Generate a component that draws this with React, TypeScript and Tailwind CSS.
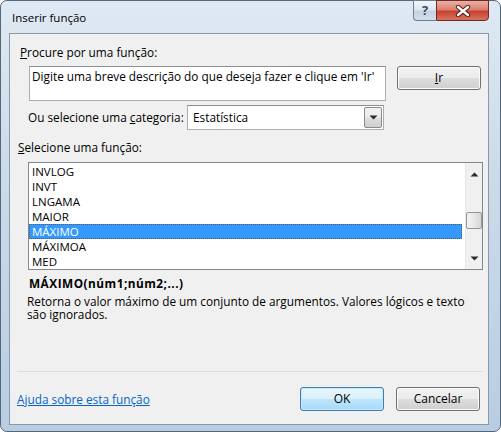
import React from 'react';

const font = { fontFamily: '"Open Sans", "Noto Sans", sans-serif' };

const funcs = ['INVLOG', 'INVT', 'LNGAMA', 'MAIOR', 'MÁXIMO', 'MÁXIMOA', 'MED'];

const Arrow: React.FC<{ down?: boolean }> = ({ down }) => (
    <svg width="9" height="5" viewBox="0 0 9 5">
        {down ? <path d="M0.5 0.5 H8.5 L4.5 4.5 Z" fill="#2b2b2b" /> : <path d="M0.5 4.5 H8.5 L4.5 0.5 Z" fill="#2b2b2b" />}
    </svg>
);

const VistaButton: React.FC<{ children: React.ReactNode; primary?: boolean }> = ({ children, primary }) => (
    <div
        className={`w-[84px] h-[24px] rounded-[3px] border flex items-center justify-center text-[12px] text-black ${
            primary
                ? 'border-[#3c7fb1] bg-[linear-gradient(180deg,#eaf6fd_0%,#d9f0fc_48%,#bee6fd_52%,#a7d9f5_100%)] shadow-[inset_0_0_0_1px_#c7e6f7]'
                : 'border-[#707070] bg-[linear-gradient(180deg,#f2f2f2_0%,#ebebeb_48%,#dddddd_52%,#cfcfcf_100%)] shadow-[inset_0_0_0_1px_#fbfbfb]'
        }`}
    >
        {children}
    </div>
);

const App: React.FC = () => {
    return (
        <div className="w-[501px] h-[432px] bg-white" style={font}>
            <div className="w-[501px] h-[432px] rounded-[7px] border border-[#55677b] bg-[linear-gradient(180deg,#dfe9f3_0%,#ccdbe9_40%,#b9cde2_100%)] flex flex-col">
                {/* title bar */}
                <div className="h-[32px] flex items-start justify-between pl-[11px] pr-[11px]">
                    <span className="mt-[9px] text-[11.5px] leading-[16px] text-black">Inserir função</span>
                    <div className="flex -mt-[1px]">
                        <div className="w-[23px] h-[21px] rounded-bl-[4px] border border-[#6a7d92] border-r-0 bg-[linear-gradient(180deg,#f3f6fa_0%,#dde6ef_45%,#c4d3e2_55%,#d2dfeb_100%)] flex items-center justify-center">
                            <span className="text-[13px] font-bold leading-none text-[#3f4c5a]">?</span>
                        </div>
                        <div className="w-[53px] h-[21px] rounded-br-[4px] border border-[#6d2a22] bg-[linear-gradient(180deg,#eab1a6_0%,#dc8070_45%,#c8422f_55%,#d9735f_100%)] flex items-center justify-center">
                            <svg width="16" height="12" viewBox="0 0 16 12">
                                <path d="M3 2 L13 10 M13 2 L3 10" stroke="#4a1a14" strokeWidth="4.2" strokeLinecap="round" />
                                <path d="M3 2 L13 10 M13 2 L3 10" stroke="#ffffff" strokeWidth="2.4" strokeLinecap="round" />
                            </svg>
                        </div>
                    </div>
                </div>

                {/* client area */}
                <div className="ml-[8px] w-[480px] h-[392px] border border-[#8799ad] bg-[#f0f0f0] flex flex-col text-[11.8px] text-black">
                    <div className="mt-[11px] ml-[10px] leading-[15px]">
                        <span className="underline">P</span>rocure por uma função:
                    </div>

                    <div className="mt-[6px] flex items-start">
                        <div className="ml-[19px] w-[357px] h-[35px] bg-white border border-[#abadb3] border-t-[#8e8f8f] px-[2px] pt-[2px] leading-[15px] whitespace-nowrap overflow-hidden">
                            Digite uma breve descrição do que deseja fazer e clique em 'Ir'
                        </div>
                        <div className="ml-[11px]">
                            <VistaButton>
                                <span className="underline">I</span>r
                            </VistaButton>
                        </div>
                    </div>

                    <div className="mt-[4px] flex items-center">
                        <span className="ml-[18px] w-[159px] shrink-0 whitespace-nowrap leading-[15px]">
                            Ou selecione uma <span className="underline">c</span>ategoria:
                        </span>
                        <div className="w-[197px] h-[25px] bg-white border border-[#abadb3] border-t-[#8e8f8f] flex items-center pl-[5px] pr-[1px]">
                            <span className="flex-1 leading-[15px]">Estatística</span>
                            <div className="w-[18px] h-[21px] border border-[#8b8b8b] rounded-[2px] bg-[linear-gradient(180deg,#f2f2f2_0%,#ebebeb_48%,#dddddd_52%,#cfcfcf_100%)] flex items-center justify-center">
                                <Arrow down />
                            </div>
                        </div>
                    </div>

                    <div className="mt-[10px] ml-[8px] leading-[15px]">
                        <span className="underline">S</span>elecione uma função:
                    </div>

                    <div className="mt-[7px] ml-[18px] w-[455px] h-[108px] bg-white border border-[#828790] flex">
                        <div className="flex-1 pt-[1px] pr-[3px] text-[11.5px]">
                            {funcs.map((f) => (
                                <div
                                    key={f}
                                    className={`h-[15px] leading-[15px] pl-[3px] ${
                                        f === 'MÁXIMO' ? 'bg-[#3399ff] text-white outline-1 outline-dotted -outline-offset-1 outline-[#5a5a5a]' : ''
                                    }`}
                                >
                                    {f}
                                </div>
                            ))}
                        </div>
                        <div className="w-[17px] bg-[#f0f0f0] border-l border-[#e6e6e6] flex flex-col items-center">
                            <div className="h-[17px] mt-[3px] flex items-center justify-center">
                                <Arrow />
                            </div>
                            <div className="mt-[29px] w-[16px] h-[17px] rounded-[2px] border border-[#959595] bg-[linear-gradient(90deg,#f3f3f3_0%,#e8e8e8_50%,#d6d6d6_100%)]" />
                            <div className="flex-1" />
                            <div className="h-[17px] mb-[2px] flex items-center justify-center">
                                <Arrow down />
                            </div>
                        </div>
                    </div>

                    <div className="mt-[6px] ml-[19px] font-bold tracking-[0.5px] leading-[15px]">MÁXIMO(núm1;núm2;...)</div>
                    <div className="mt-[4px] ml-[17px] w-[450px] leading-[13px]">
                        Retorna o valor máximo de um conjunto de argumentos. Valores lógicos e texto são ignorados.
                    </div>

                    <div className="flex-1" />

                    <div className="ml-[7px] w-[466px] h-px bg-[#dcdcdc]" />

                    <div className="mt-[15px] mb-[13px] flex items-center">
                        <span className="ml-[7px] text-[#0066cc] underline leading-[15px]">Ajuda sobre esta função</span>
                        <div className="ml-auto flex gap-[12px] mr-[8px]">
                            <VistaButton primary>OK</VistaButton>
                            <VistaButton>Cancelar</VistaButton>
                        </div>
                    </div>
                </div>
            </div>
        </div>
    );
};

export default App;
